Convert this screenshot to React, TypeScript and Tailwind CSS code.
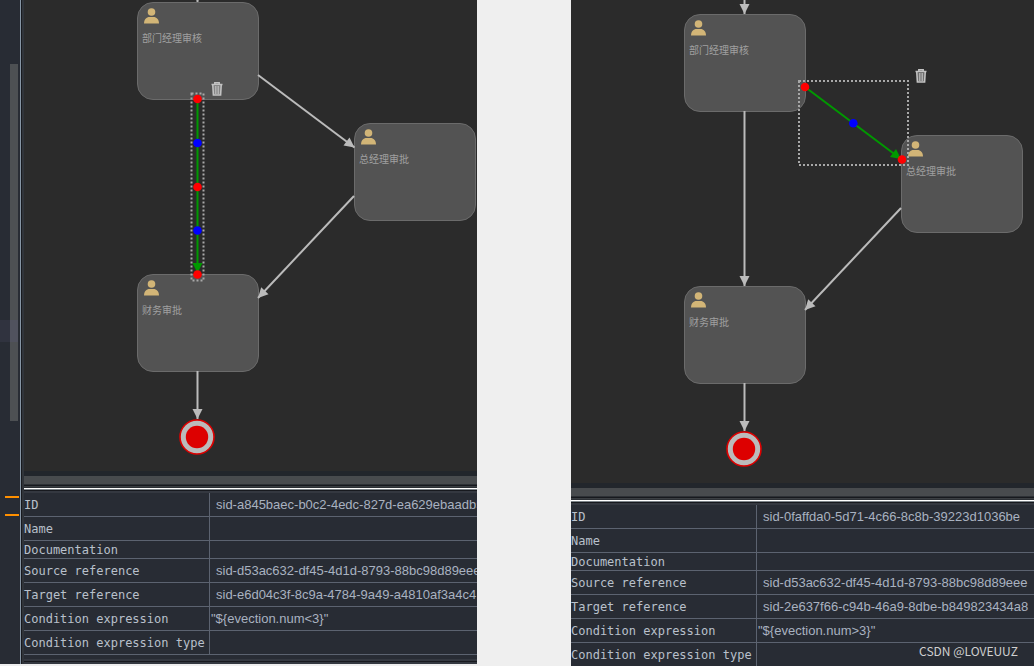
import React from "react";
import clsx from "clsx";

type Task = { name: string; x: number; y: number };
type Property = { label: string; value?: string; short?: boolean; flush?: boolean };

const tasks: Task[] = [
  { name: "部门经理审核", x: 113, y: 2 },
  { name: "总经理审批", x: 330, y: 123 },
  { name: "财务审批", x: 113, y: 274 },
];

const leftProps: Property[] = [
  { label: "ID", value: "sid-a845baec-b0c2-4edc-827d-ea629ebaadb5" },
  { label: "Name" },
  { label: "Documentation", short: true },
  { label: "Source reference", value: "sid-d53ac632-df45-4d1d-8793-88bc98d89eee" },
  { label: "Target reference", value: "sid-e6d04c3f-8c9a-4784-9a49-a4810af3a4c4" },
  { label: "Condition expression", value: '"${evection.num<3}"', flush: true },
  { label: "Condition expression type" },
];

const rightProps: Property[] = [
  { label: "ID", value: "sid-0faffda0-5d71-4c66-8c8b-39223d1036be" },
  { label: "Name" },
  { label: "Documentation", short: true },
  { label: "Source reference", value: "sid-d53ac632-df45-4d1d-8793-88bc98d89eee" },
  { label: "Target reference", value: "sid-2e637f66-c94b-46a9-8dbe-b849823434a8" },
  { label: "Condition expression", value: '"${evection.num>3}"', flush: true },
  { label: "Condition expression type" },
];

function UserIcon() {
  return (
    <svg width="15" height="16" viewBox="0 0 15 16" fill="#d2b577">
      <circle cx="7.5" cy="4" r="3.8" />
      <path d="M0 15.5C0 11.5 2.6 9.1 5.4 9.1h4.2c2.8 0 5.4 2.4 5.4 6.4z" />
    </svg>
  );
}

function TrashIcon() {
  return (
    <svg width="12" height="14" viewBox="0 0 12 14" fill="none" stroke="#c3c3c3">
      <path d="M0.5 2.5h11M3.8 2.3V.7h4.4v1.6" strokeWidth="1.5" />
      <path d="M1.8 3l.6 10h7.2l.6-10" strokeWidth="1.6" fill="#c3c3c3" fillOpacity="0.3" />
      <path d="M4.3 4v8M6 4v8M7.7 4v8" strokeWidth="1" />
    </svg>
  );
}

function Arrow({ x1, y1, x2, y2, color = "#bbbbbb" }: { x1: number; y1: number; x2: number; y2: number; color?: string }) {
  const angle = (Math.atan2(y2 - y1, x2 - x1) * 180) / Math.PI;
  return (
    <g stroke={color} fill={color}>
      <line x1={x1} y1={y1} x2={x2} y2={y2} strokeWidth="2" />
      <path d="M0 0L-10 -5V5z" stroke="none" transform={`translate(${x2} ${y2}) rotate(${angle})`} />
    </g>
  );
}

function Handle({ x, y, color }: { x: number; y: number; color: string }) {
  return <circle cx={x} cy={y} r="4.3" fill={color} />;
}

function Diagram({ selected }: { selected: "finance" | "manager" }) {
  return (
    <div className="relative h-[471px]">
      {tasks.map((task) => (
        <div
          key={task.name}
          className="absolute flex h-[98px] w-[122px] flex-col rounded-2xl border border-[#6b6b6b] bg-[#535353] px-1 pt-[5px]"
          style={{ left: task.x, top: task.y }}
        >
          <span className="pl-[2px]">
            <UserIcon />
          </span>
          <span className="mt-[7px] font-['Liberation_Serif','Noto_Sans_CJK_SC',serif] text-[10px] leading-4 text-[#a0a0a0]">
            {task.name}
          </span>
        </div>
      ))}

      <svg className="pointer-events-none absolute inset-0 h-full w-full overflow-visible">
        <Arrow x1={173.5} y1={-30} x2={173.5} y2={2} />
        <Arrow x1={173.5} y1={371} x2={173.5} y2={419} />
        <Arrow x1={330} y1={196} x2={234} y2={298} />
        <circle cx="173" cy="437" r="17" fill="#bbbbbb" stroke="#dd0000" strokeWidth="1.6" />
        <circle cx="173" cy="437" r="11.2" fill="#dd0000" />
        {selected === "finance" ? (
          <>
            <Arrow x1={234} y1={75} x2={330.5} y2={147.5} />
            <Arrow x1={173.5} y1={99} x2={173.5} y2={273} color="#009900" />
            <rect x="167.5" y="93.5" width="12" height="187" fill="none" stroke="#a8a8a8" strokeWidth="2" strokeDasharray="2 2" />
            <Handle x={173.5} y={99} color="#ff0000" />
            <Handle x={173.5} y={143} color="#0000ff" />
            <Handle x={173.5} y={187} color="#ff0000" />
            <Handle x={173.5} y={230.5} color="#0000ff" />
            <Handle x={173.5} y={274.5} color="#ff0000" />
          </>
        ) : (
          <>
            <Arrow x1={173.5} y1={99} x2={173.5} y2={274} />
            <Arrow x1={234} y1={75} x2={330} y2={147} color="#009900" />
            <rect x="228" y="69" width="109" height="84" fill="none" stroke="#a8a8a8" strokeWidth="2" strokeDasharray="2 2" />
            <Handle x={234} y={75} color="#ff0000" />
            <Handle x={282.3} y={111.3} color="#0000ff" />
            <Handle x={331} y={147.5} color="#ff0000" />
          </>
        )}
      </svg>

      <button
        type="button"
        aria-label="Delete"
        className={clsx("absolute", selected === "finance" ? "left-[187px] top-[82px]" : "left-[344px] top-[57px]")}
      >
        <TrashIcon />
      </button>
    </div>
  );
}

function Divider() {
  return (
    <div>
      <div className="h-[5px] bg-[#22262c]" />
      <div className="h-2 bg-[#484b4e]" />
      <div className="h-px bg-[#2d3136]" />
      <div className="h-px bg-[#17191e]" />
      <div className="h-px bg-[#3a3e42]" />
      <div className="h-px bg-[#2d3136]" />
      <div className="h-px bg-white" />
      <div className="h-px bg-[#7d8489]" />
      <div className="h-px bg-[#17191e]" />
      <div className="h-[2px] bg-[#343840]" />
    </div>
  );
}

function PropertyTable({ rows }: { rows: Property[] }) {
  return (
    <table className="w-full table-fixed border-separate border-spacing-0 bg-[#282c34]">
      <tbody>
        {rows.map((row) => (
          <tr key={row.label} className={row.short ? "h-[18px]" : "h-6"}>
            <th
              scope="row"
              className="w-[186px] whitespace-nowrap border-b border-r border-[#5c6370] p-0 text-left font-['DejaVu_Sans_Mono',monospace] text-[12px] font-normal leading-4 text-[#b9c0cb]"
            >
              {row.label}
            </th>
            <td
              className={clsx(
                "overflow-hidden whitespace-nowrap border-b border-[#5c6370] py-0 pr-0 font-['Liberation_Sans',sans-serif] text-[13px] leading-4 text-[#a9b2c0]",
                row.flush ? "pl-px" : "pl-[6px]"
              )}
            >
              {row.value}
            </td>
          </tr>
        ))}
      </tbody>
    </table>
  );
}

function Gutter() {
  return (
    <div className="flex w-5 shrink-0 flex-col bg-[#282c34]">
      <div className="h-16" />
      <div className="ml-[10px] h-64 w-2 bg-[#4d5053]" />
      <div className="mr-[2px] flex h-[22px] bg-[#30333f]">
        <div className="ml-[10px] w-2 bg-[#50525e]" />
      </div>
      <div className="ml-[10px] h-[79px] w-2 bg-[#4d5053]" />
      <div className="ml-[5px] mr-px mt-[75px] h-[2px] bg-[#ff9000]" />
      <div className="ml-[5px] mr-px mt-4 h-[2px] bg-[#ff9000]" />
    </div>
  );
}

function App() {
  return (
    <main className="grid h-screen grid-cols-[477fr_94fr_463fr] items-start overflow-hidden bg-[#efefef]">
      <section className="flex min-w-0 overflow-hidden bg-[#2b2b2b]">
        <Gutter />
        <div className="w-px shrink-0 bg-[#8796a5]" />
        <div className="w-px shrink-0 bg-[#17191e]" />
        <div className="w-[2px] shrink-0 bg-[#30343a]" />
        <div className="min-w-0 grow">
          <Diagram selected="finance" />
          <Divider />
          <PropertyTable rows={leftProps} />
          <div className="h-1 bg-[#282c34]" />
          <div className="h-[2px] bg-[#343840]" />
          <div className="h-px bg-[#17191e]" />
          <div className="h-[2px] bg-[#343840]" />
        </div>
      </section>

      <section className="col-start-3 min-w-0 overflow-hidden bg-[#2b2b2b] pt-3">
        <Diagram selected="manager" />
        <Divider />
        <PropertyTable rows={rightProps} />
      </section>

      <p className="absolute bottom-[7px] right-4 font-['Noto_Sans_CJK_SC',sans-serif] text-[12px] leading-4 text-[#d0d0d0]">
        CSDN @LOVEUUZ
      </p>
    </main>
  );
}

export default App;
